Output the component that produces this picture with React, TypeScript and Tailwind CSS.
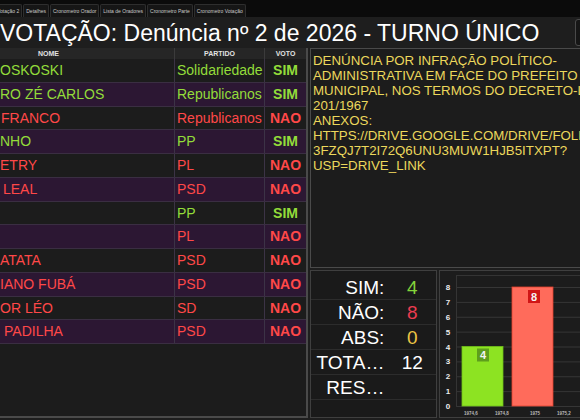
type Vote = 'SIM' | 'NAO'

type Row = {
  name: string
  party: string
  vote: Vote
  pad: string
}

const rows: Row[] = [
  { name: 'OSKOSKI', party: 'Solidariedade', vote: 'SIM', pad: 'pl-0' },
  { name: 'RO ZÉ CARLOS', party: 'Republicanos', vote: 'SIM', pad: 'pl-0' },
  { name: 'FRANCO', party: 'Republicanos', vote: 'NAO', pad: 'pl-[1px]' },
  { name: 'NHO', party: 'PP', vote: 'SIM', pad: 'pl-0' },
  { name: 'ETRY', party: 'PL', vote: 'NAO', pad: 'pl-0' },
  { name: 'LEAL', party: 'PSD', vote: 'NAO', pad: 'pl-[3px]' },
  { name: '', party: 'PP', vote: 'SIM', pad: 'pl-0' },
  { name: '', party: 'PL', vote: 'NAO', pad: 'pl-0' },
  { name: 'ATATA', party: 'PSD', vote: 'NAO', pad: 'pl-0' },
  { name: 'IANO FUBÁ', party: 'PSD', vote: 'NAO', pad: 'pl-0' },
  { name: 'OR LÉO', party: 'SD', vote: 'NAO', pad: 'pl-0' },
  { name: 'PADILHA', party: 'PSD', vote: 'NAO', pad: 'pl-[4px]' },
]

const tabs = ['Detalhes', 'Cronometro Orador', 'Lista de Oradores', 'Cronometro Parte', 'Cronometro Votação']

const description = [
  'DENÚNCIA POR INFRAÇÃO POLÍTICO-',
  'ADMINISTRATIVA EM FACE DO PREFEITO',
  'MUNICIPAL, NOS TERMOS DO DECRETO-LEI',
  '201/1967',
  'ANEXOS:',
  'HTTPS://DRIVE.GOOGLE.COM/DRIVE/FOLDERS/',
  '3FZQJ7T2I72Q6UNU3MUW1HJB5ITXPT?',
  'USP=DRIVE_LINK',
]

function TabBar() {
  return (
    <div className="h-[17px] bg-[#0b0b0b] flex items-end gap-[1px] overflow-hidden">
      <div className="-ml-[6px] h-[13px] px-[2px] pt-[3px] bg-[#161616] border-t border-x border-[#2e2e2e] rounded-t-[2px] text-[5px] leading-[6px] text-[#c8c8c8] whitespace-nowrap">
        Votação 2
      </div>
      {tabs.map((t) => (
        <div
          key={t}
          className="h-[13px] px-[2px] pt-[3px] bg-[#161616] border-t border-x border-[#2e2e2e] rounded-t-[2px] text-[5px] leading-[6px] text-[#c8c8c8] whitespace-nowrap"
        >
          {t}
        </div>
      ))}
    </div>
  )
}

function VoteTable() {
  return (
    <div className="w-[308px] h-[370px] shrink-0 bg-[#1c1c1c] border-r-2 border-b-2 border-[#4a4a4a] flex flex-col">
      <div className="h-[11px] flex bg-[#262626] text-[7px] leading-[11px] font-bold text-[#e2e2e2]">
        <div className="w-[175px] pl-[38px] border-r border-[#3b3b3b]">NOME</div>
        <div className="w-[90px] text-center border-r border-[#3b3b3b]">PARTIDO</div>
        <div className="flex-1 text-center">VOTO</div>
      </div>
      {rows.map((r, i) => {
        const color = r.vote === 'SIM' ? 'text-[#93dc3a]' : 'text-[#ff4848]'
        const bg = i % 2 === 0 ? 'bg-[#1c1c1c]' : 'bg-[#2c1733]'
        return (
          <div key={i} className={`h-[23.75px] flex border-b border-[#3a2e42] text-[14px] leading-[22px] ${bg} ${color}`}>
            <div className={`w-[175px] border-r border-[#3c3346] whitespace-nowrap overflow-hidden ${r.pad}`}>{r.name}</div>
            <div className="w-[90px] border-r border-[#3c3346] pl-[2px] whitespace-nowrap overflow-hidden">{r.party}</div>
            <div className="flex-1 text-center font-bold">{r.vote}</div>
          </div>
        )
      })}
    </div>
  )
}

function Stats() {
  const items = [
    { label: 'SIM:', value: '4', color: 'text-[#84d43a]' },
    { label: 'NÃO:', value: '8', color: 'text-[#ea3c50]' },
    { label: 'ABS:', value: '0', color: 'text-[#ecc545]' },
    { label: 'TOTA…', value: '12', color: 'text-white' },
    { label: 'RES…', value: '', color: 'text-white' },
  ]
  return (
    <div className="w-[127px] shrink-0 bg-[#1a1a1a] border border-[#3f3f3f] pt-[4px]">
      {items.map((it) => (
        <div key={it.label} className="h-[25px] flex items-center border-b border-[#2c2c2c] text-[19px] leading-none">
          <div className="w-[74px] text-right text-white whitespace-nowrap">{it.label}</div>
          <div className={`w-[48px] ml-[4px] text-center ${it.color}`}>{it.value}</div>
        </div>
      ))}
    </div>
  )
}

function Chart() {
  const y = (v: number) => 135 - v * 14.875
  return (
    <div className="flex-1 bg-[#1c1c1c] border border-[#3f3f3f] overflow-hidden">
      <svg width="190" height="146" className="block">
        <rect x="16.5" y="4.5" width="180" height="131" fill="none" stroke="#343434" />
        {[0, 1, 2, 3, 4, 5, 6, 7, 8].map((v) => (
          <g key={v}>
            <line x1="17" x2="190" y1={y(v) + 0.5} y2={y(v) + 0.5} stroke="#363636" />
            <text x="8" y={y(v) + 3} textAnchor="middle" fontSize="8" fontWeight="bold" fill="#ececec" fontFamily="Liberation Sans, Arial, sans-serif">
              {v}
            </text>
          </g>
        ))}
        <rect x="22" y={y(4)} width="41" height={y(0) - y(4)} fill="#8de322" stroke="#6fc018" strokeWidth="0.8" />
        <rect x="37" y={y(4) + 2} width="12" height="13" fill="#5e9e1c" />
        <text x="43" y={y(4) + 12.5} textAnchor="middle" fontSize="11" fontWeight="bold" fill="#f4f4f4" fontFamily="Liberation Sans, Arial, sans-serif">4</text>
        <rect x="72" y={y(8)} width="41" height={y(0) - y(8)} fill="#ff6b5b" stroke="#e2402e" strokeWidth="0.8" />
        <rect x="88" y={y(8) + 3} width="12" height="13" fill="#d01616" />
        <text x="94" y={y(8) + 13.5} textAnchor="middle" fontSize="11" fontWeight="bold" fill="#f4f4f4" fontFamily="Liberation Sans, Arial, sans-serif">8</text>
        {[
          ['1974,6', 31],
          ['1974,8', 62],
          ['1975', 95],
          ['1975,2', 124],
        ].map(([t, x]) => (
          <text key={t} x={x} y="144" textAnchor="middle" fontSize="4.5" fontWeight="bold" fill="#b8b8b8" fontFamily="Liberation Sans, Arial, sans-serif">
            {t}
          </text>
        ))}
      </svg>
    </div>
  )
}

export default function App() {
  return (
    <div className="w-[580px] h-[420px] overflow-hidden bg-[#1e1e1e] font-['Liberation_Sans',Arial,sans-serif]">
      <div className="w-[640px] h-[420px] flex flex-col">
        <TabBar />
        <div className="h-[31px] flex items-center justify-between pr-[25px]">
          <h1 className="text-white text-[23px] leading-none whitespace-nowrap pt-[2px]">
            VOTAÇÃO: Denúncia nº 2 de 2026 - TURNO ÚNICO
          </h1>
          <div className="w-[40px] h-[27px] border border-[#4a4a4a] rounded-[3px] bg-[#161616]" />
        </div>
        <div className="flex gap-[2px] h-[372px]">
          <VoteTable />
          <div className="flex-1 flex flex-col gap-[2px] h-[370px]">
            <div className="h-[220px] bg-[#1c1c1c] border border-[#4a4a4a] pt-[4px] pl-[2px] text-[13.3px] leading-[15px] text-[#ecd85c] whitespace-nowrap overflow-hidden">
              {description.map((l) => (
                <div key={l}>{l}</div>
              ))}
            </div>
            <div className="flex-1 flex gap-[2px]">
              <Stats />
              <Chart />
            </div>
          </div>
        </div>
      </div>
    </div>
  )
}
